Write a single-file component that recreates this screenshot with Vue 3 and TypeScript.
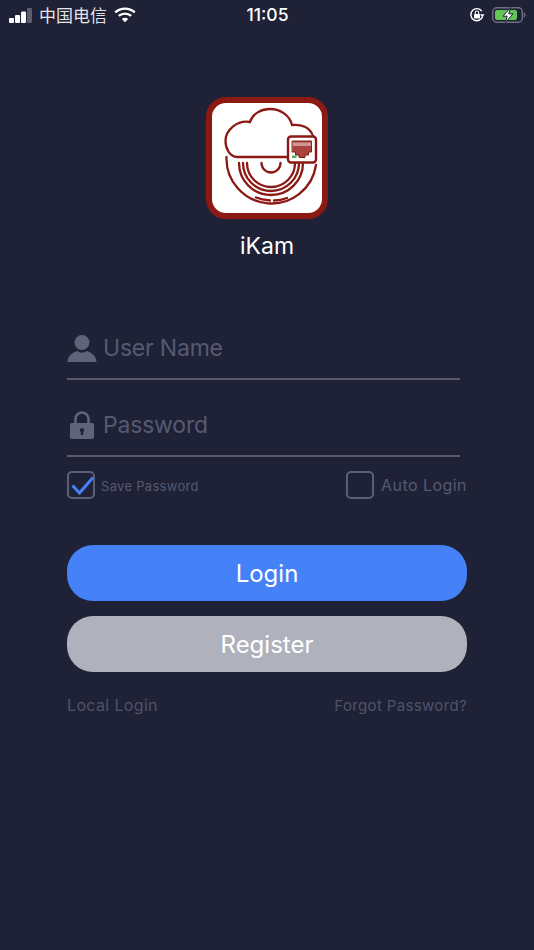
<script setup lang="ts">
import { ref } from "vue";

const userName = ref("");
const password = ref("");
const savePassword = ref(true);
const autoLogin = ref(false);
</script>

<template>
  <div class="page">
    <div class="status-bar">
      <div class="status-left">
        <svg class="signal" width="24" height="15" viewBox="0 0 24 15">
          <rect x="0" y="10" width="5" height="5" rx="1" fill="#fff" />
          <rect x="6" y="7" width="5" height="8" rx="1" fill="#fff" />
          <rect x="12" y="3.500" width="5" height="11.500" rx="1" fill="#fff" />
          <rect x="18" y="0" width="5" height="15" rx="1" fill="#5b5c6c" />
        </svg>
        <span class="carrier">中国电信</span>
        <svg class="wifi" width="22" height="16" viewBox="0 0 22 16">
          <path d="M1.200 5.400C6.800 0.300 15.200 0.300 20.800 5.400" fill="none" stroke="#fff" stroke-width="2.400" />
          <path d="M4.800 8.900C8.300 5.800 13.700 5.800 17.200 8.900" fill="none" stroke="#fff" stroke-width="2.400" />
          <path d="M7.800 11.900C9.700 10.400 12.300 10.400 14.200 11.900L11 15.300Z" fill="#fff" />
        </svg>
      </div>
      <span class="time">11:05</span>
      <div class="status-right">
        <svg width="16" height="16" viewBox="0 0 16 16">
          <path d="M13.600 9.500A6 6 0 1 1 12.800 4.200" fill="none" stroke="#fff" stroke-width="1.400" />
          <path d="M11 7.200L15.600 7.200L13.300 10.200Z" fill="#fff" />
          <rect x="5" y="7" width="6" height="4.500" rx="0.800" fill="#fff" />
          <path d="M6.300 7V5.700A1.700 1.700 0 0 1 9.700 5.700V7" fill="none" stroke="#fff" stroke-width="1.100" />
        </svg>
        <svg width="34" height="16" viewBox="0 0 34 16">
          <rect x="0.700" y="0.700" width="29.600" height="14.600" rx="4" fill="none" stroke="#6f7080" stroke-width="1.400" />
          <rect x="3" y="3" width="22" height="10" rx="2" fill="#62c554" />
          <path d="M31.800 5.500C33 5.800 33.500 6.800 33.500 8C33.500 9.200 33 10.200 31.800 10.500Z" fill="#6f7080" />
          <path d="M18.500 0.500L11 9.200H15.200L13.500 15.500L21 6.800H16.800Z" fill="#fff" stroke="#1f2136" stroke-width="1" />
        </svg>
      </div>
    </div>

    <div class="brand">
      <div class="logo">
        <svg width="110" height="110" viewBox="6 6 110 110" fill="none" stroke="#8c1a14" stroke-linecap="round" stroke-width="2.300">
          <path d="M82 60H31C24 59.500 19.500 52 19.500 44C19.500 33 31 23 44 25C47 16 56 12 64 12C75 12 84 19 86 28C95 27 104 30 107 39" />
          <path d="M20.500 60A45 45 0 0 0 110 68" />
          <path d="M33 66A32 32 0 0 0 97 66" />
          <path d="M37 66A28 28 0 0 0 93 66" />
          <path d="M41 66A24 24 0 0 0 89 66" />
          <path d="M55.500 66A9.500 9.500 0 0 0 74.500 66" />
          <path d="M50 100.500C54 102 59 103 64 103.500" />
          <path d="M68 103.500C72 103.500 77 102.500 81 101" />
          <rect x="82" y="39.500" width="28" height="26" rx="3" fill="#fff" stroke-width="2.400" />
          <path d="M86.500 44H105.500V55H102.500V58H99V60.500H93V58H89.500V55H86.500Z" fill="#a8443d" stroke="#8c1a14" stroke-width="1" />
          <path d="M88 45.500V49M90 45.500V49M92 45.500V49M94 45.500V49M96 45.500V49M98 45.500V49M100 45.500V49M102 45.500V49M104 45.500V49" stroke="#fff" stroke-width="0.900" stroke-linecap="butt" />
          <rect x="86" y="58.500" width="4.500" height="2.500" fill="#4caf50" stroke="none" />
        </svg>
      </div>
      <span class="app-name">iKam</span>
    </div>

    <form class="form" @submit.prevent>
      <label class="field">
        <svg width="30" height="30" viewBox="0 0 30 30">
          <circle cx="15" cy="9.500" r="7.500" fill="#5f6479" />
          <path d="M0.500 29C1 22 6 19.500 10.500 18C13 20 17 20 19.500 18C24 19.500 29 22 29.500 29Z" fill="#5f6479" />
        </svg>
        <input v-model="userName" class="text-input" type="text" placeholder="User Name" />
      </label>
      <label class="field">
        <svg width="30" height="30" viewBox="0 0 30 30">
          <path d="M8.500 14V9A6.500 6.500 0 0 1 21.500 9V14" fill="none" stroke="#5f6479" stroke-width="2.600" />
          <path
            fill-rule="evenodd"
            d="M4.500 13H25.500A1.500 1.500 0 0 1 27 14.500V27A2 2 0 0 1 25 29H5A2 2 0 0 1 3 27V14.500A1.500 1.500 0 0 1 4.500 13ZM15 18A2.300 2.300 0 0 0 13.800 22.200V25H16.200V22.200A2.300 2.300 0 0 0 15 18Z"
            fill="#5f6479"
          />
        </svg>
        <input v-model="password" class="text-input" type="password" placeholder="Password" />
      </label>

      <div class="options">
        <button class="option" type="button" @click="savePassword = !savePassword">
          <span class="box">
            <svg v-if="savePassword" width="30" height="30" viewBox="0 0 30 30">
              <path d="M4.500 13.500L11.500 21L25 5.500" fill="none" stroke="#4582f8" stroke-width="3" />
            </svg>
          </span>
          <span class="save-label">Save Password</span>
        </button>
        <button class="option auto" type="button" @click="autoLogin = !autoLogin">
          <span class="box">
            <svg v-if="autoLogin" width="30" height="30" viewBox="0 0 30 30">
              <path d="M4.500 13.500L11.500 21L25 5.500" fill="none" stroke="#4582f8" stroke-width="3" />
            </svg>
          </span>
          <span class="auto-label">Auto Login</span>
        </button>
      </div>

      <button class="btn btn-login" type="submit">Login</button>
      <button class="btn btn-register" type="button">Register</button>

      <div class="links">
        <a class="local">Local Login</a>
        <a class="forgot">Forgot Password?</a>
      </div>
    </form>
  </div>
</template>

<style scoped>
.page {
  height: 950px;
  background: #1f2136;
  color: #fff;
  font-family: Inter, "Noto Sans CJK SC", sans-serif;
  display: flex;
  flex-direction: column;
  overflow: hidden;
}

.status-bar {
  height: 30px;
  display: grid;
  grid-template-columns: 1fr auto 1fr;
  align-items: center;
  padding: 0 8px 0 9px;
}

.status-left {
  display: flex;
  align-items: center;
}

.carrier {
  margin-left: 6px;
  font-family: "Noto Sans CJK SC", sans-serif;
  font-size: 17px;
  line-height: 20px;
  color: #e4e4e8;
}

.wifi {
  margin-left: 7px;
}

.time {
  font-size: 17.500px;
  font-weight: 500;
  line-height: 20px;
}

.status-right {
  display: flex;
  align-items: center;
  justify-content: flex-end;
  gap: 7px;
}

.brand {
  margin-top: 67px;
  display: flex;
  flex-direction: column;
  align-items: center;
}

.logo {
  box-sizing: border-box;
  width: 122px;
  height: 122px;
  border: 6px solid #8c1a14;
  border-radius: 20px;
  background: #fff;
}

.logo svg {
  display: block;
}

.app-name {
  margin-top: 13px;
  font-size: 23px;
  line-height: 28px;
}

.form {
  margin-top: 58px;
  padding: 0 67px;
  display: flex;
  flex-direction: column;
}

.field {
  box-sizing: border-box;
  width: 393px;
  height: 77px;
  display: flex;
  align-items: flex-end;
  gap: 6px;
  padding-bottom: 15px;
  border-bottom: 2px solid #585a6c;
}

.field:first-child {
  height: 62px;
}

.text-input {
  flex: 1;
  min-width: 0;
  height: 30px;
  padding: 0;
  border: none;
  outline: none;
  background: transparent;
  color: #fff;
  font-family: inherit;
  font-size: 23px;
  letter-spacing: -0.2px;
}

.text-input::placeholder {
  color: #565a71;
  opacity: 1;
}

.options {
  margin-top: 14px;
  display: flex;
  justify-content: space-between;
}

.option {
  display: flex;
  align-items: center;
  padding: 0;
  border: none;
  background: none;
  font-family: inherit;
  color: #565a71;
}

.box {
  box-sizing: border-box;
  width: 28px;
  height: 28px;
  border: 2px solid #5b5f74;
  border-radius: 5px;
  display: block;
  position: relative;
}

.box svg {
  position: absolute;
  left: -1px;
  top: -1px;
}

.save-label {
  margin-left: 6px;
  padding-top: 2px;
  font-size: 13px;
  letter-spacing: 0.3px;
}

.auto-label {
  margin-left: 7px;
  font-size: 16px;
  letter-spacing: 0.45px;
}

.btn {
  width: 400px;
  height: 56px;
  border: none;
  border-radius: 26px;
  color: #fff;
  font-family: inherit;
  font-size: 24px;
  padding: 0;
}

.btn-login {
  margin-top: 46px;
  background: #4582f8;
}

.btn-register {
  margin-top: 15px;
  background: #afb2bc;
}

.links {
  margin-top: 22px;
  width: 400px;
  display: flex;
  justify-content: space-between;
  align-items: baseline;
  color: #4f5369;
  line-height: 22px;
}

.local {
  font-size: 16px;
  letter-spacing: 0.35px;
}

.forgot {
  font-size: 15px;
  letter-spacing: 0.35px;
}
</style>

<style>
html,
body {
  margin: 0;
  background: #1f2136;
}
</style>
